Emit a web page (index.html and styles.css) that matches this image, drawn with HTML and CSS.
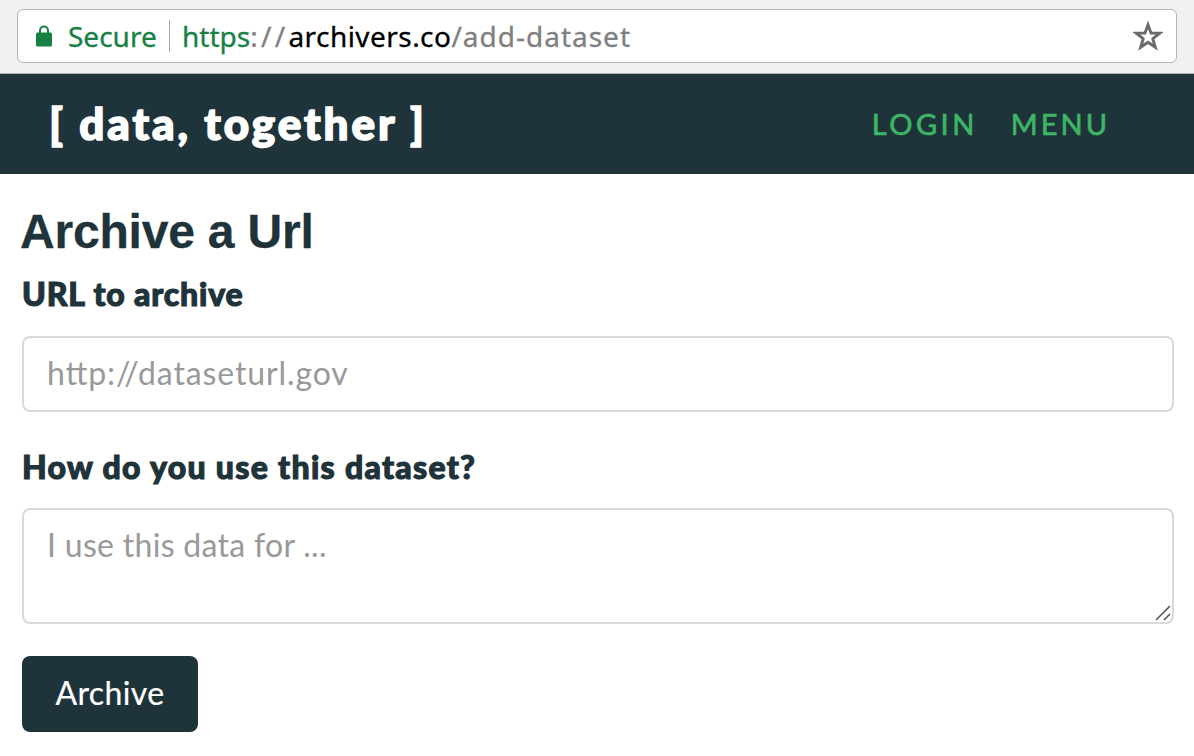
FILE: index.html
```html
<!DOCTYPE html>
<html lang="en">
<head>
<meta charset="utf-8">
<title>Archive a Url</title>
<link rel="stylesheet" href="styles.css">
</head>
<body>
<div class="toolbar">
  <div class="address">
    <svg class="lock" width="16" height="22" viewBox="0 0 16 22"><path d="M4 9V5.5a4 4 0 0 1 8 0V9" fill="none" stroke="#178144" stroke-width="2"/><rect y="7.5" width="16" height="14" rx="1.5" fill="#178144"/></svg>
    <span class="secure">Secure</span>
    <span class="divider"></span>
    <span class="url"><span class="scheme">https</span><span class="slashes">://</span><span class="host">archivers.co</span><span class="path">/add-dataset</span></span>
    <svg class="star" width="30" height="30" viewBox="0 0 30 30"><path d="M15 3.8l3 8.2 8.8.2-7 5.5 2.5 8.6-7.3-5-7.3 5 2.5-8.6-7-5.5 8.8-.2z" fill="none" stroke="#6b6b6b" stroke-width="2.9"/></svg>
  </div>
</div>
<header class="header">
  <div class="brand">[ data, together ]</div>
  <nav class="nav"><a class="login">LOGIN</a><a class="menu">MENU</a></nav>
</header>
<main class="content">
  <h1 class="title">Archive a Url</h1>
  <form class="form">
    <label class="label label-url" for="url">URL to archive</label>
    <input class="field field-url" id="url" placeholder="http://dataseturl.gov">
    <label class="label label-use" for="use">How do you use this dataset?</label>
    <div class="area">
      <textarea class="field field-use" id="use" placeholder="I use this data for ..."></textarea>
      <svg class="grip" width="16" height="16" viewBox="0 0 16 16"><path d="M1 15L15 1M9 15l6-6" stroke="#555" stroke-width="1.6"/></svg>
    </div>
    <button class="button" type="button">Archive</button>
  </form>
</main>
</body>
</html>
```
FILE: styles.css
```css
* { box-sizing: border-box; }
body { margin: 0; background: #fff; color: #1f333a; font-family: Lato, sans-serif; }
.toolbar { height: 74px; padding: 9px 17px 0; background: #f1f1f1; border-bottom: 1px solid #b5b5b5; }
.address { display: flex; align-items: center; height: 54px; padding: 0 13px 0 18px; background: #fff; border: 1px solid #b5b5b5; border-radius: 6px; font: 28px/52px "Noto Sans", sans-serif; white-space: nowrap; -webkit-text-stroke: 0.3px; }
.lock { flex: none; }
.secure { flex: none; width: 117px; padding-left: 16px; color: #178144; }
.divider { flex: none; width: 1px; height: 32px; margin-right: 12px; background: #a6a6a6; }
.url { flex: 1; display: flex; color: #808080; }
.scheme { color: #178144; }
.slashes { letter-spacing: 3.3px; }
.host { color: #000; letter-spacing: 0.45px; }
.path { letter-spacing: 1px; }
.star { flex: none; }
.header { display: flex; justify-content: space-between; height: 100px; padding: 0 84px 0 49px; background: #1f333a; line-height: 98px; white-space: nowrap; }
.brand { color: #fff; font-size: 44px; font-weight: 900; letter-spacing: 2.95px; -webkit-text-stroke: 1.6px; }
.nav { display: flex; gap: 33px; color: #3cb664; font-size: 29px; line-height: 99px; letter-spacing: 3px; -webkit-text-stroke: 0.7px; }
.login { letter-spacing: 3.5px; }
.content { padding: 30px 20px 0 22px; }
.title { margin: 0 0 0 -2px; font: bold 48px/56px "Liberation Sans", sans-serif; letter-spacing: -0.2px; -webkit-text-stroke: 0.3px; }
.form { display: flex; flex-direction: column; align-items: flex-start; }
.label { font-size: 32px; font-weight: 900; line-height: 40px; white-space: nowrap; -webkit-text-stroke: 1.1px; }
.label-url { margin: 14px 0 22px; letter-spacing: 0.85px; }
.label-use { margin: 35px 0 21px; letter-spacing: 1.3px; }
.field { display: block; width: 1152px; margin: 0; border: 2px solid #d9d9d9; border-radius: 8px; background: #fff; color: #1f333a; font: 32px/40px Lato, sans-serif; outline: 0; }
.field::placeholder { color: #999; opacity: 1; }
.field-url { height: 76px; padding: 0 24px 4px 23px; letter-spacing: 0.88px; font-feature-settings: "liga" 1; }
.area { position: relative; }
.field-use { height: 116px; padding: 15px 23px; resize: none; overflow: hidden; letter-spacing: 0.3px; }
.grip { position: absolute; right: 3px; bottom: 3px; }
.button { width: 176px; height: 76px; margin-top: 32px; padding: 0 0 2px; border: 0; border-radius: 8px; background: #1f333a; color: #fff; font: 32px/74px Lato, sans-serif; letter-spacing: 0.4px; -webkit-text-stroke: 0.2px; }
```
